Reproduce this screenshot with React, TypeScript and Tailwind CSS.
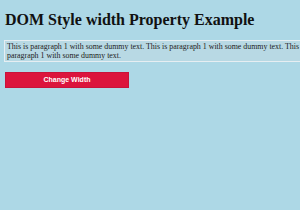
export default function App() {
  return (
    <div className="w-[300px] h-[210px] bg-[#add8e6] overflow-hidden" style={{ fontFamily: '"Liberation Serif", serif' }}>
      <div className="pl-[5px] pt-[11px]">
        <h1 className="text-[16px] leading-[18px] font-bold text-[#111]">DOM Style width Property Example</h1>
      </div>
      <div className="mt-[11px] ml-[4px] w-[320px] border border-[#e6eef2] bg-[#b8d9e4] px-[2px] py-[1px] text-[7.9px] leading-[9px] text-[#222]">
        This is paragraph 1 with some dummy text. This is paragraph 1 with some dummy text. This is paragraph 1 with some dummy text.
      </div>
      <div className="mt-[10px] ml-[5px]">
        <button className="w-[124px] h-[16px] bg-[#dc143c] border border-[#c8123a] text-white text-[7px] font-bold flex items-center justify-center" style={{ fontFamily: '"Liberation Sans", sans-serif' }}>
          Change Width
        </button>
      </div>
    </div>
  );
}
